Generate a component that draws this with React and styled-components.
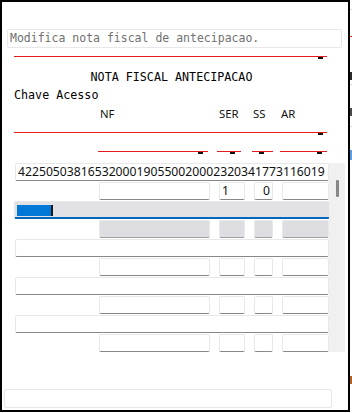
import React from "react";
import styled, { createGlobalStyle, css } from "styled-components";

const GlobalStyle = createGlobalStyle`
  html, body {
    margin: 0;
    padding: 0;
    background: #fff;
    overflow: hidden;
  }
  #root {
    width: 352px;
    height: 413px;
  }
`;

const MONO = `"DejaVu Sans Mono", "Liberation Mono", monospace`;
const SANS = `"Noto Sans", "Open Sans", sans-serif`;

const Screen = styled.div`
  display: flex;
  width: 352px;
  height: 413px;
`;

const Window = styled.div`
  box-sizing: border-box;
  width: 350px;
  height: 412px;
  border: 2px solid #000;
  display: flex;
  flex-direction: column;
  background: #fff;
`;

// what shows of the app behind the dialog
const Backdrop = styled.div`
  width: 2px;
  height: 413px;
  background: linear-gradient(
    to bottom,
    #fff 0 9px,
    #d6d6d6 9px 10px,
    #fff 10px 36px,
    #e02020 36px 37px,
    #fff 37px 72px,
    #2a2a2a 72px 80px,
    #fff 80px 84px,
    #d6d6d6 84px 85px,
    #fff 85px 108px,
    #4a4a4a 108px 116px,
    #fff 116px 126px,
    #d6d6d6 126px 127px,
    #fff 127px 150px,
    #5aa0e0 150px 160px,
    #fff 160px 376px,
    #b06020 376px 384px,
    #fff 384px
  );
`;

const Description = styled.div`
  box-sizing: border-box;
  margin: 27px 6px 0 5px;
  height: 19px;
  border: 1px solid #e8e8e8;
  border-radius: 2px;
  padding-left: 2px;
  font-family: ${MONO};
  font-size: 11.5px;
  line-height: 17px;
  color: #707070;
  white-space: nowrap;
`;

const Body = styled.div`
  display: flex;
  flex-direction: column;
  padding-left: 12px;
`;

// red field underline with the little black marker near its right end
const Rule = styled.div`
  position: relative;
  box-sizing: border-box;
  height: 1px;
  border-top: 1px solid #e31b1b;
  flex: none;
  width: ${(p) => p.$width}px;
  margin-left: ${(p) => p.$left || 0}px;
  margin-top: ${(p) => p.$top || 0}px;

  &::after {
    content: "";
    position: absolute;
    top: 0;
    right: ${(p) => p.$mark}px;
    width: 5px;
    height: 2px;
    background: #111;
  }
`;

const RuleRow = styled.div`
  display: flex;
  margin-top: 18px;
`;

const Title = styled.div`
  width: 313px;
  margin-top: 12px;
  text-align: center;
  padding-left: 2px;
  box-sizing: border-box;
  font-family: ${MONO};
  font-size: 11.7px;
  line-height: 16px;
  color: #000;
`;

const Label = styled.div`
  margin-top: 2px;
  font-family: ${MONO};
  font-size: 11.7px;
  line-height: 16px;
  color: #000;
`;

const Columns = styled.div`
  display: grid;
  grid-template-columns: 75px 111px 26px 19px 47px;
  column-gap: 9px;
  margin-top: ${(p) => p.$top || 0}px;
`;

const HeadCell = styled.div`
  grid-column: ${(p) => p.$col};
  padding-left: ${(p) => p.$pad || 0}px;
  font-family: ${SANS};
  font-size: 11.3px;
  line-height: 16px;
  color: #111;
  white-space: nowrap;
`;

const ListArea = styled.div`
  display: flex;
  margin-top: 11px;
  margin-left: 1px;
`;

const Rows = styled.div`
  width: 314px;
  display: flex;
  flex-direction: column;
  gap: 1px;
`;

const boxBase = css`
  box-sizing: border-box;
  height: 18px;
  border: 1px solid #e8e8e8;
  border-bottom: 1px solid #888;
  border-radius: 2px;
  background: #fff;
  font-family: ${SANS};
  font-size: 12.2px;
  line-height: 16px;
  color: #111;
  white-space: nowrap;
  overflow: hidden;
`;

const KeyField = styled.div`
  ${boxBase}
  padding-left: 2px;
  ${(p) =>
    p.$selected &&
    css`
      margin-left: -1px;
      width: 316px;
      background: #e1e1e6;
      border-bottom: 2px solid #0067c0;
      display: flex;
      align-items: center;
      padding: 1px 0 0 2px;
    `}
`;

const Selection = styled.span`
  display: block;
  width: 34px;
  height: 11px;
  background: #0078d7;
  border-right: 2px solid #1a1a1a;
`;

const Cell = styled.div`
  ${boxBase}
  grid-column: ${(p) => p.$col};
  text-align: ${(p) => p.$align || "left"};
  padding: 0 2px;
  ${(p) =>
    p.$disabled &&
    css`
      background: #dedee2;
      border-bottom-color: #a0a0a4;
    `}
`;

const Scrollbar = styled.div`
  width: 16px;
  background: #f0f0f0;
  display: flex;
  justify-content: center;
  padding-top: 17px;
  box-sizing: border-box;
`;

const Thumb = styled.div`
  width: 3px;
  height: 17px;
  border-radius: 1px;
  background: #878787;
`;

const Footer = styled.div`
  box-sizing: border-box;
  margin: auto 16px 2px 2px;
  height: 19px;
  border: 1px solid #e8e8e8;
  border-radius: 2px;
`;

const records = [
  { key: "42250503816532000190550020002320341773116019", ser: "1", ss: "0" },
  { key: "", selected: true, disabled: true },
  { key: "" },
  { key: "" },
  { key: "" },
];

// field underlines under NF / SER / SS / AR
const segments = [
  { left: 84, width: 110, mark: 5 },
  { left: 9, width: 24, mark: 6 },
  { left: 11, width: 21, mark: 9 },
  { left: 7, width: 47, mark: 5 },
];

function FieldRow({ ser, ss, disabled }) {
  return (
    <Columns>
      <Cell $col={2} $disabled={disabled} />
      <Cell $col={3} $disabled={disabled}>
        {ser}
      </Cell>
      <Cell $col={4} $disabled={disabled} $align="right">
        {ss}
      </Cell>
      <Cell $col={5} $disabled={disabled} />
    </Columns>
  );
}

export default function App() {
  return (
    <>
      <GlobalStyle />
      <Screen>
        <Window>
          <Description>Modifica nota fiscal de antecipacao.</Description>
          <Body>
            <Rule $top={8} $width={313} $mark={4} />
            <Title>NOTA FISCAL ANTECIPACAO</Title>
            <Label>Chave Acesso</Label>
            <Columns $top={3}>
              <HeadCell $col={2} $pad={2}>NF</HeadCell>
              <HeadCell $col={3} $pad={1}>SER</HeadCell>
              <HeadCell $col={4}>SS</HeadCell>
              <HeadCell $col={5}>AR</HeadCell>
            </Columns>
            <Rule $top={10} $width={313} $mark={4} />
            <RuleRow>
              {segments.map((s, i) => (
                <Rule key={i} $left={s.left} $width={s.width} $mark={s.mark} />
              ))}
            </RuleRow>
            <ListArea>
              <Rows>
                {records.map((r, i) => (
                  <React.Fragment key={i}>
                    <KeyField $selected={r.selected}>
                      {r.selected ? <Selection /> : r.key}
                    </KeyField>
                    <FieldRow ser={r.ser} ss={r.ss} disabled={r.disabled} />
                  </React.Fragment>
                ))}
              </Rows>
              <Scrollbar>
                <Thumb />
              </Scrollbar>
            </ListArea>
          </Body>
          <Footer />
        </Window>
        <Backdrop />
      </Screen>
    </>
  );
}
